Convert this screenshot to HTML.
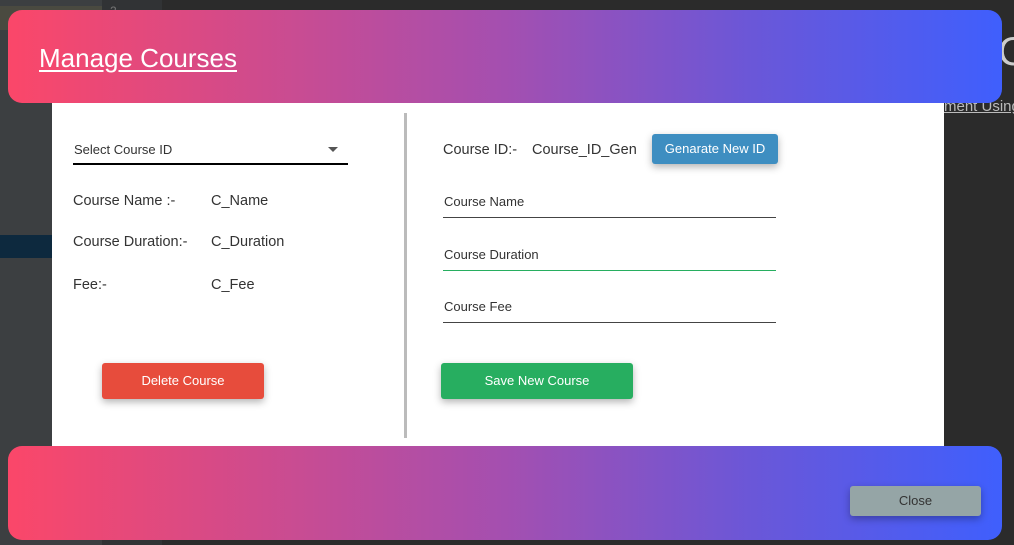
<!DOCTYPE html>
<html><head><meta charset="utf-8"><style>
*{margin:0;padding:0;box-sizing:border-box}
body{width:1014px;height:545px;overflow:hidden;background:#2b2b2b;font-family:"Liberation Sans",sans-serif;position:relative}
.a{position:absolute}
.t{position:absolute;white-space:nowrap;color:#333;font-size:14.5px;line-height:18px}
.grad{background:linear-gradient(90deg,#fb4769 0%,#a44fb0 50%,#6a57d8 75%,#3f5ffd 100%);border-radius:14px}
.btn{position:absolute;border-radius:3px;color:#fff;font-size:13px;text-align:center;box-shadow:0 3px 8px rgba(0,0,0,.3)}
.line{position:absolute;height:1px;background:#444}
</style></head><body>
<div class="a" style="left:0;top:0;width:52px;height:545px;background:#3c3f41"></div>
<div class="a" style="left:52px;top:0;width:50px;height:545px;background:#3c3f41"></div>
<div class="a" style="left:102px;top:0;width:60px;height:545px;background:#313335"></div>
<div class="a" style="left:0;top:6px;width:102px;height:24px;background:#4a4a40"></div>
<div class="a" style="left:0;top:235px;width:52px;height:23px;background:#0d293e"></div>
<div class="t" style="left:110px;top:2px;color:#777;font-size:12px">2</div>
<div class="t" style="left:944px;top:98px;color:#bbb;font-size:15px;text-decoration:underline">ment Using</div>
<div class="t" style="left:998px;top:30px;color:#ccc;font-size:40px;line-height:44px">C</div>
<div class="a" style="left:52px;top:100px;width:892px;height:350px;background:#fff"></div>
<div class="a grad" style="left:8px;top:10px;width:994px;height:93px"></div>
<div class="t" style="left:39px;top:42px;color:#fff;font-size:26px;line-height:32px;text-decoration:underline;text-underline-offset:3px">Manage Courses</div>
<div class="a grad" style="left:8px;top:446px;width:994px;height:94px"></div>
<div class="btn" style="left:850px;top:486px;width:131px;height:30px;line-height:30px;background:#95a5a6;color:#333">Close</div>

<div class="t" style="left:74px;top:141px;font-size:13px">Select Course ID</div>
<div class="a" style="left:328px;top:147px;width:0;height:0;border-left:5px solid transparent;border-right:5px solid transparent;border-top:5px solid #555"></div>
<div class="a" style="left:73px;top:163px;width:275px;height:2px;background:#000"></div>
<div class="t" style="left:73px;top:192px">Course Name :-</div>
<div class="t" style="left:211px;top:192px">C_Name</div>
<div class="t" style="left:73px;top:233px">Course Duration:-</div>
<div class="t" style="left:211px;top:233px">C_Duration</div>
<div class="t" style="left:73px;top:276px">Fee:-</div>
<div class="t" style="left:211px;top:276px">C_Fee</div>
<div class="btn" style="left:102px;top:363px;width:162px;height:36px;line-height:36px;background:#e74c3c">Delete Course</div>

<div class="a" style="left:404px;top:113px;width:3px;height:325px;background:#bbb"></div>

<div class="t" style="left:443px;top:141px">Course ID:-</div>
<div class="t" style="left:532px;top:141px">Course_ID_Gen</div>
<div class="btn" style="left:652px;top:134px;width:126px;height:30px;line-height:30px;background:#3e8ec1">Genarate New ID</div>
<div class="t" style="left:444px;top:193px;font-size:13px">Course Name</div>
<div class="line" style="left:443px;top:217px;width:333px"></div>
<div class="t" style="left:444px;top:246px;font-size:13px">Course Duration</div>
<div class="line" style="left:443px;top:270px;width:333px;background:#27ae60"></div>
<div class="t" style="left:444px;top:298px;font-size:13px">Course Fee</div>
<div class="line" style="left:443px;top:322px;width:333px"></div>
<div class="btn" style="left:441px;top:363px;width:192px;height:36px;line-height:36px;background:#27ae60">Save New Course</div>
</body></html>
